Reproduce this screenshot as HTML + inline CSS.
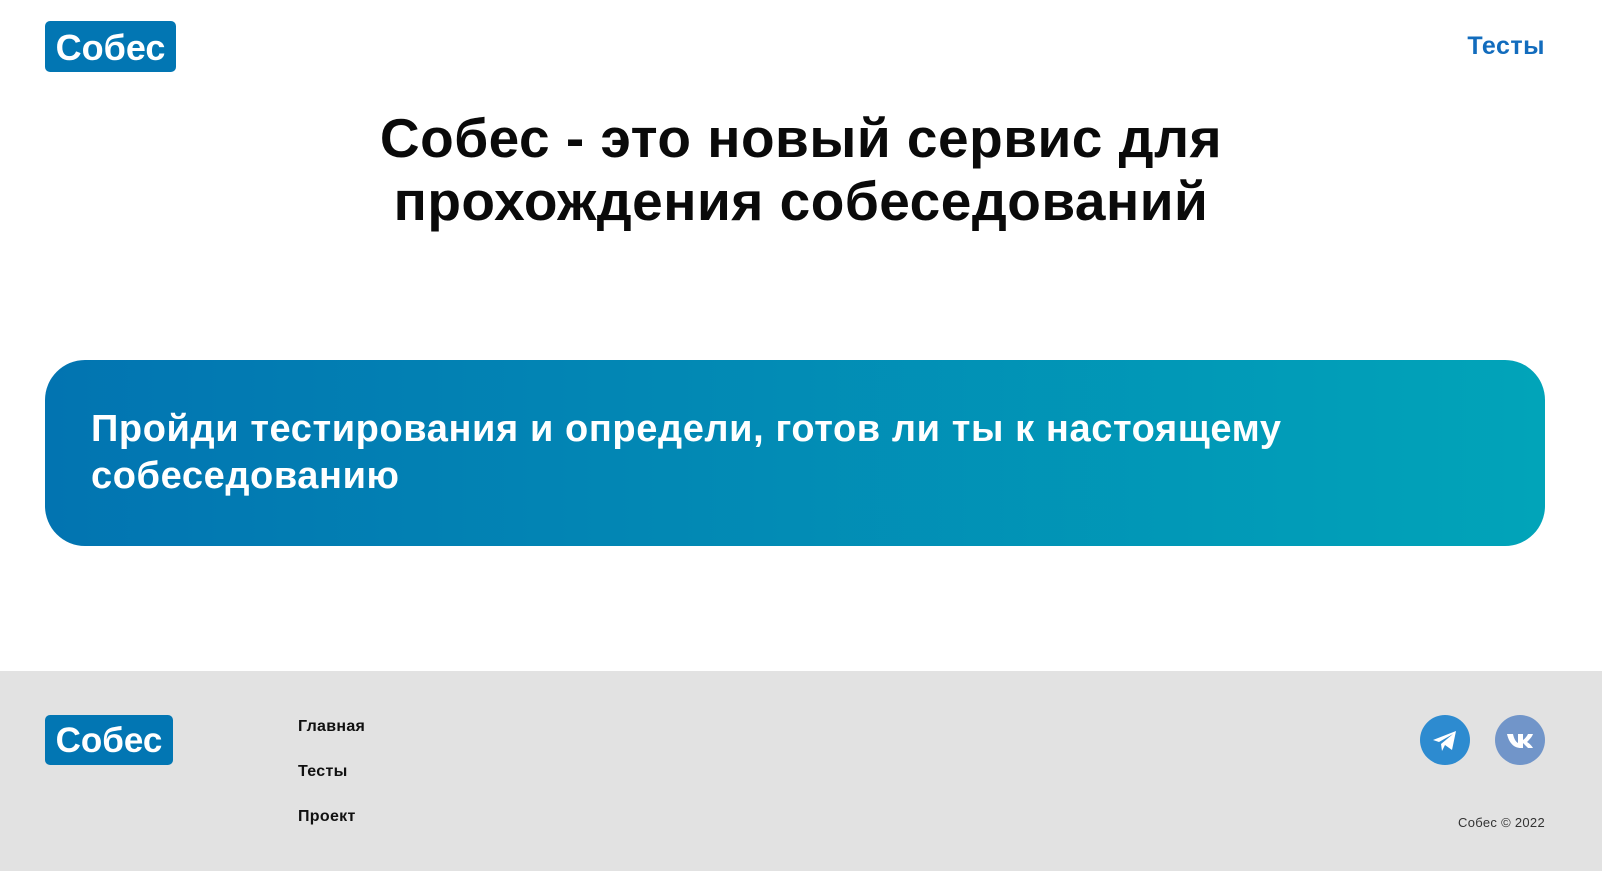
<!DOCTYPE html>
<html><head><meta charset="utf-8"><style>
*{margin:0;padding:0;box-sizing:border-box}
body{width:1602px;height:871px;background:#fff;font-family:"Liberation Sans","Noto Sans CJK SC",sans-serif;position:relative;overflow:hidden}
.logo{position:absolute;background:#0276b3;color:#fff;font-weight:bold;border-radius:5px;text-align:center}
.h1{position:absolute;left:0;width:1602px;top:107px;text-align:center;font-size:55px;line-height:63px;font-weight:bold;color:#0a0a0a;letter-spacing:0.5px}
.nav{position:absolute;right:57px;top:32px;font-size:25px;font-weight:bold;color:#126cbd;letter-spacing:0.5px}
.banner{position:absolute;left:45px;top:360px;width:1500px;height:186px;border-radius:40px;background:linear-gradient(90deg,#0274b1,#01a4b9);color:#fff;font-weight:bold;font-size:38px;line-height:47px;padding:46px 0 0 46px;letter-spacing:0.6px}
.footer{position:absolute;left:0;top:671px;width:1602px;height:200px;background:#e2e2e2}
.fl{position:absolute;left:298px;font-size:16px;font-weight:bold;color:#111;letter-spacing:0.3px}
.circ{position:absolute;top:44px;width:50px;height:50px;border-radius:50%}
.copy{position:absolute;right:57px;top:144px;font-size:13px;color:#333;letter-spacing:0.3px}
</style></head><body>
<div class="logo" style="left:45px;top:21px;width:131px;height:51px;font-size:36px;line-height:53px">Собес</div>
<div class="nav">Тесты</div>
<div class="h1">Собес - это новый сервис для<br>прохождения собеседований</div>
<div class="banner">Пройди тестирования и определи, готов ли ты к настоящему<br>собеседованию</div>
<div class="footer">
<div class="logo" style="left:45px;top:44px;width:128px;height:50px;font-size:35px;line-height:52px">Собес</div>
<div class="fl" style="top:47px">Главная</div>
<div class="fl" style="top:92px">Тесты</div>
<div class="fl" style="top:137px">Проект</div>
<div class="circ" style="left:1420px;background:#2d8bd0"><svg width="50" height="50" viewBox="0 0 50 50"><path d="M13 25 L36 16 L32 35 L25 30 L22 36 L21 29 L33 19 L19 27 Z" fill="#fff"/></svg></div>
<div class="circ" style="left:1495px;background:#7195c9"><svg width="50" height="50" viewBox="0 0 50 50"><path d="M12 19 H18 C19 24 21 27 23 28 V19 H28 V25 C30 24 32 21 33 19 H38 C37 22 34 25 32 27 C34 28 37 31 38 33 H33 C31 31 29 29 28 28 V33 H26 C19 33 14 28 12 19 Z" fill="#fff"/></svg></div>
<div class="copy">Собес © 2022</div>
</div>
</body></html>
